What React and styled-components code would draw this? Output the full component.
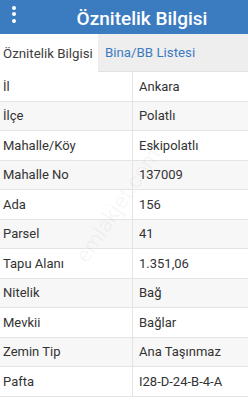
import React from 'react'
import styled, { createGlobalStyle } from 'styled-components';

const rows = [
    ["İl", "Ankara"],
    ["İlçe", "Polatlı"],
    ["Mahalle/Köy", "Eskipolatlı"],
    ["Mahalle No", "137009"],
    ["Ada", "156"],
    ["Parsel", "41"],
    ["Tapu Alanı", "1.351,06"],
    ["Nitelik", "Bağ"],
    ["Mevkii", "Bağlar"],
    ["Zemin Tip", "Ana Taşınmaz"],
    ["Pafta", "I28-D-24-B-4-A"],
]

function App() {
    return (
        <Page>
            <GlobalStyle />
            <Header>
                <MenuDots>
                    <Dot />
                    <Dot />
                    <Dot />
                </MenuDots>
                <Title>Öznitelik Bilgisi</Title>
            </Header>
            <Tabs>
                <Tab active>Öznitelik Bilgisi</Tab>
                <Tab>Bina/BB Listesi</Tab>
            </Tabs>
            <Table>
                {rows.map(([label, value], i) => (
                    <Row key={label} striped={i % 2 === 1}>
                        <Label>{label}</Label>
                        <Value>{value}</Value>
                    </Row>
                ))}
            </Table>
            <Watermark>emlakjet.com</Watermark>
        </Page>
    )
}

export default App;

const GlobalStyle = createGlobalStyle`
    html, body {
        margin: 0;
        padding: 0;
        background: #fff;
    }
    body {
        font-family: Roboto, "Liberation Sans", sans-serif;
    }
`;
const Page = styled.div`
    position: relative;
    width: 248px;
    height: 415px;
    overflow: hidden;
    background: #fff;
`;
const Header = styled.div`
    height: 34px;
    background: #3b7cc1;
    display: flex;
    align-items: center;
`;
const MenuDots = styled.div`
    width: 28px;
    display: flex;
    flex-direction: column;
    align-items: center;
    gap: 2.5px;
    margin-top: -6px;
`;
const Dot = styled.span`
    width: 4px;
    height: 4px;
    border-radius: 50%;
    background: #fff;
`;
const Title = styled.div`
    flex: 1;
    text-align: center;
    padding-left: 8px;
    padding-top: 2px;
    color: #fff;
    font-size: 19px;
    font-weight: 500;
`;
const Tabs = styled.div`
    height: 38px;
    display: flex;
    background: #eeeeee;
    border-bottom: 1px solid #e2e2e2;
    box-sizing: border-box;
`;
const Tab = styled.div`
    display: flex;
    align-items: center;
    width: ${(p) => (p.active ? '98px' : 'auto')};
    box-sizing: border-box;
    padding-left: ${(p) => (p.active ? '3px' : '7px')};
    background: ${(p) => (p.active ? '#fff' : 'transparent')};
    color: ${(p) => (p.active ? '#3d3d3d' : '#3b7cc1')};
    font-size: 13.3px;
    margin-bottom: ${(p) => (p.active ? '-1px' : '0')};
`;
const Table = styled.div`
    display: flex;
    flex-direction: column;
`;
const Row = styled.div`
    display: grid;
    grid-template-columns: 133px 1fr;
    height: 29.5px;
    box-sizing: border-box;
    border-bottom: 1px solid #e4e4e4;
    background: ${(p) => (p.striped ? '#f7f7f7' : '#fff')};
    font-size: 13px;
    color: #333;
`;
const Label = styled.div`
    display: flex;
    align-items: center;
    padding-left: 3px;
    border-right: 1px solid #e4e4e4;
`;
const Value = styled.div`
    display: flex;
    align-items: center;
    padding-left: 6px;
`;
const Watermark = styled.div`
    position: absolute;
    left: 118px;
    top: 205px;
    transform: translate(-50%, -50%) rotate(-56deg);
    color: rgba(0, 0, 0, 0.05);
    font-size: 22px;
    pointer-events: none;
    white-space: nowrap;
`;
